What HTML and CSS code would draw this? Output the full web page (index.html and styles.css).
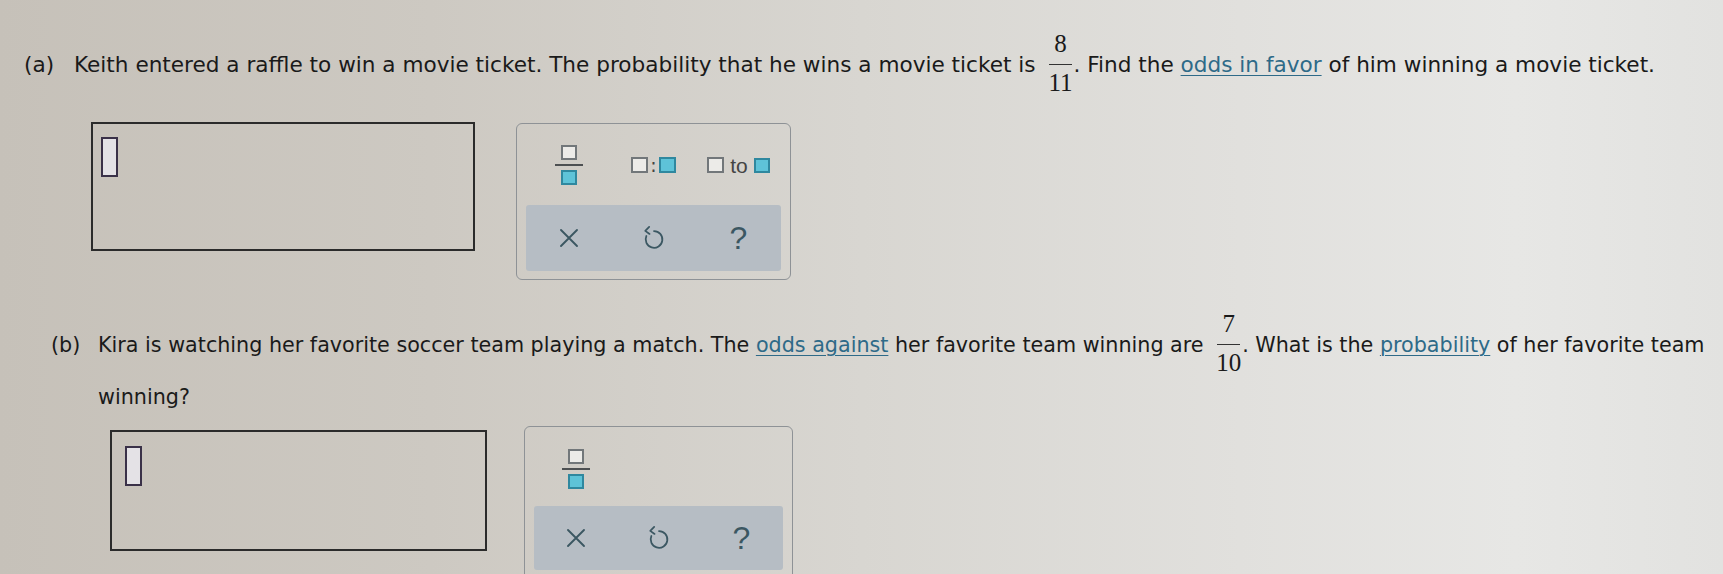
FILE: index.html
```html
<!DOCTYPE html>
<html lang="en">
<head>
<meta charset="utf-8">
<title>Odds and probability</title>
<link rel="stylesheet" href="styles.css">
</head>
<body>
<main class="page">
  <section class="part part-a">
    <p class="question">
      <span class="label">(a)</span>
      <span class="body">Keith entered a raffle to win a movie ticket. The probability that he wins a movie ticket is <span class="frac"><span class="num">8</span><span class="den">11</span></span>. Find the <a class="term" href="#">odds in favor</a> of him winning a movie ticket.</span>
    </p>
    <div class="answer-row">
      <div class="answer-box"><span class="cursor"></span></div>
      <div class="keypad">
        <div class="keys">
          <span class="key">
            <span class="ico-frac"><span class="sq"></span><span class="fbar"></span><span class="sq sq-blue"></span></span>
          </span>
          <span class="key">
            <span class="sq sq-wide"></span><span class="colon">:</span><span class="sq sq-wide sq-blue"></span>
          </span>
          <span class="key">
            <span class="sq sq-wide"></span><span class="to">to</span><span class="sq sq-blue"></span>
          </span>
        </div>
        <div class="tools">
          <span class="tool">
            <svg class="ico" width="22" height="20" viewBox="0 0 22 20"><path d="M3 2 L19 18 M19 2 L3 18" /></svg>
          </span>
          <span class="tool">
            <svg class="ico" width="26" height="26" viewBox="6 8 28 28"><path d="M20 14.5 A9 9 0 1 1 11.8 19.8" /><path d="M14.8 10 L10.6 14.3 L15.2 17.6" /></svg>
          </span>
          <span class="tool"><span class="help">?</span></span>
        </div>
      </div>
    </div>
  </section>

  <section class="part part-b">
    <p class="question">
      <span class="label">(b)</span>
      <span class="body">Kira is watching her favorite soccer team playing a match. The <a class="term" href="#">odds against</a> her favorite team winning are <span class="frac"><span class="num">7</span><span class="den">10</span></span>. What is the <a class="term" href="#">probability</a> of her favorite team winning?</span>
    </p>
    <div class="answer-row">
      <div class="answer-box"><span class="cursor"></span></div>
      <div class="keypad">
        <div class="keys">
          <span class="key">
            <span class="ico-frac"><span class="sq"></span><span class="fbar"></span><span class="sq sq-blue"></span></span>
          </span>
          <span class="key"></span>
          <span class="key"></span>
        </div>
        <div class="tools">
          <span class="tool">
            <svg class="ico" width="22" height="20" viewBox="0 0 22 20"><path d="M3 2 L19 18 M19 2 L3 18" /></svg>
          </span>
          <span class="tool">
            <svg class="ico" width="26" height="26" viewBox="6 8 28 28"><path d="M20 14.5 A9 9 0 1 1 11.8 19.8" /><path d="M14.8 10 L10.6 14.3 L15.2 17.6" /></svg>
          </span>
          <span class="tool"><span class="help">?</span></span>
        </div>
      </div>
    </div>
  </section>
</main>
</body>
</html>
```

FILE: styles.css
```css
html, body {
  margin: 0;
  padding: 0;
  height: 100%;
}

body {
  background: linear-gradient(to right, #c6c1b9 0%, #cdc9c2 25%, #d8d6d1 50%, #e1e0dd 72%, #e7e7e5 88%, #e2e2e0 100%);
  color: #1a1a1a;
  font-family: "DejaVu Sans", Verdana, sans-serif;
  overflow: hidden;
}

.page {
  padding-top: 31px;
}

.question {
  margin: 0;
  display: flex;
  align-items: baseline;
  line-height: 45px;
}

.part-a .question {
  padding-left: 24px;
  font-size: 21.6px;
}

.part-a .label {
  flex: 0 0 50px;
}

.part-b .question {
  padding-left: 51px;
  margin-top: 31px;
  font-size: 20.7px;
}

.part-b .label {
  flex: 0 0 47px;
}

.body {
  flex: 1;
}

.term {
  color: #2e6a88;
  text-decoration: underline;
  text-underline-offset: 3px;
  text-decoration-thickness: 1px;
}

.frac {
  display: inline-flex;
  flex-direction: column;
  align-items: center;
  vertical-align: 20px;
  margin: 0 1px 0 6px;
  font-family: "Liberation Serif", "Times New Roman", serif;
  font-size: 25px;
  line-height: 25px;
}

.num {
  padding: 0 5px 8px;
  border-bottom: 1.5px solid #333;
}

.den {
  padding-top: 5px;
}

.answer-row {
  display: flex;
  align-items: flex-start;
}

.part-a .answer-row {
  margin-top: 27px;
  margin-left: 91px;
  gap: 41px;
}

.part-b .answer-row {
  margin-top: 6px;
  margin-left: 110px;
  gap: 37px;
}

.answer-box {
  box-sizing: border-box;
  border: 2px solid #2b2b2b;
  padding: 13px 0 0 8px;
}

.part-a .answer-box {
  width: 384px;
  height: 129px;
}

.part-b .answer-box {
  width: 377px;
  height: 121px;
  margin-top: 4px;
  padding: 14px 0 0 13px;
}

.cursor {
  display: block;
  box-sizing: border-box;
  width: 17px;
  height: 40px;
  border: 2px solid #3a3148;
  background: #e4e2e6;
}

.keypad {
  box-sizing: border-box;
  border: 1.5px solid #8e9296;
  border-radius: 6px;
  padding: 9px 9px 8px;
}

.part-a .keypad {
  width: 275px;
  margin-top: 1px;
}

.part-b .keypad {
  width: 269px;
  padding-bottom: 12px;
}

.keys {
  box-sizing: border-box;
  display: grid;
  grid-template-columns: repeat(3, 1fr);
  align-items: center;
  height: 72px;
  padding-bottom: 8px;
}

.part-b .keys {
  height: 70px;
  padding-bottom: 4px;
}

.key {
  display: flex;
  align-items: center;
  justify-content: center;
  gap: 3px;
}

.ico-frac {
  display: flex;
  flex-direction: column;
  align-items: center;
  gap: 4px;
}

.sq {
  box-sizing: border-box;
  display: block;
  width: 16px;
  height: 15px;
  border: 2px solid #72777a;
  background: #ecebe8;
}

.sq-wide {
  width: 17px;
  height: 16px;
}

.sq-blue {
  background: #5ec3d8;
  border-color: #2f889f;
}

.fbar {
  display: block;
  width: 28px;
  height: 2px;
  background: #4d5052;
}

.colon {
  font-size: 19px;
  line-height: 1;
  color: #444;
  margin: 0 -1px;
}

.to {
  font-family: "Liberation Sans", Arial, sans-serif;
  font-size: 21px;
  line-height: 1;
  color: #444;
  margin: 0 3px;
}

.tools {
  display: grid;
  grid-template-columns: repeat(3, 1fr);
  align-items: center;
  height: 66px;
  background: #b6bdc4;
  border-radius: 3px;
}

.part-b .tools {
  height: 64px;
}

.tool {
  display: flex;
  align-items: center;
  justify-content: center;
}

.ico {
  fill: none;
  stroke: #3b5762;
  stroke-width: 1.9;
  stroke-linecap: round;
  stroke-linejoin: round;
}

.help {
  font-family: "Liberation Sans", Arial, sans-serif;
  font-size: 32px;
  line-height: 1;
  color: #3b5762;
}
```
